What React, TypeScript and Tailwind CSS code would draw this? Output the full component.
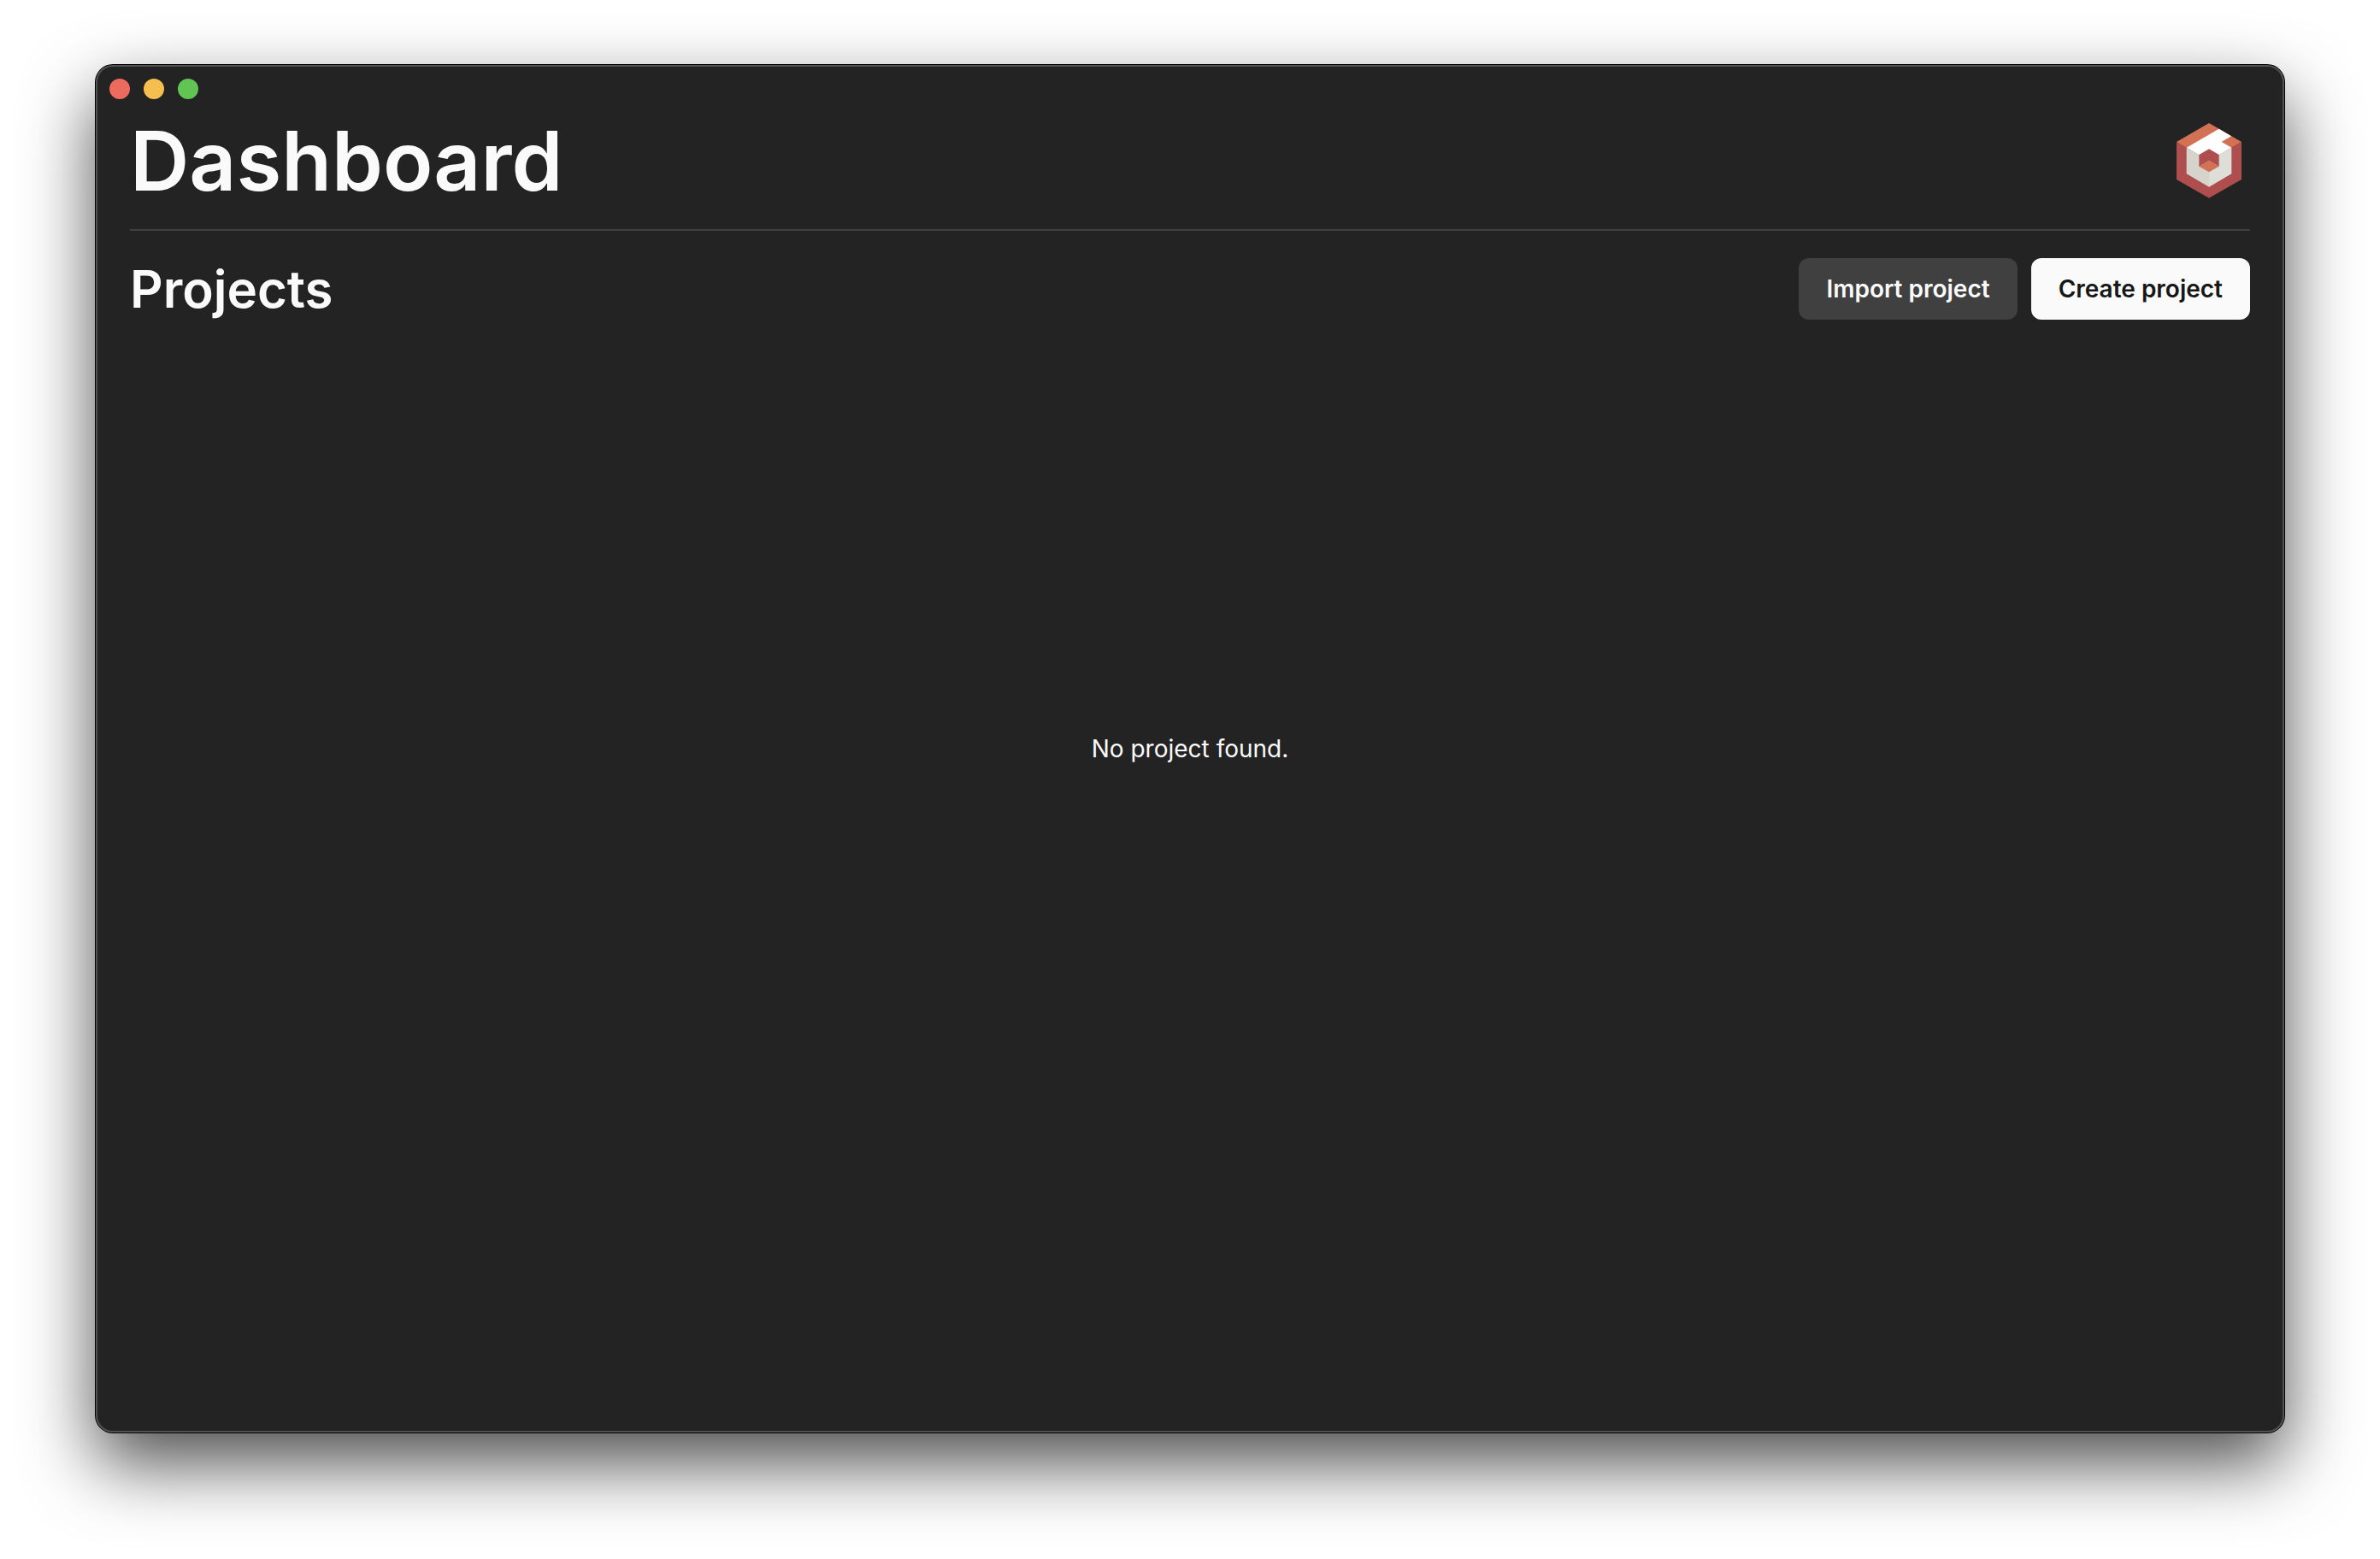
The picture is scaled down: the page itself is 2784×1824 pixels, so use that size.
import React from "react";

function Logo() {
  return (
    <svg viewBox="18 30 288 288" className="size-24 shrink-0" role="img" aria-label="Logo">
      <polygon points="48,108 162,174 276,108 276,240 162,305 48,240" fill="#ae4e4e" />
      <polygon points="162,42 276,108 241,128 84,128 82,128 48,108" fill="#d27153" />
      <polygon points="83,128 197,62 240,88 206,108 241,128 162,175" fill="#ffffff" />
      <polygon points="83,128 162,174 162,266 83,220" fill="#d5d3cc" />
      <polygon points="162,174 241,128 241,220 162,266" fill="#deded9" />
      <polygon points="162,133 197,153 197,194 162,174 127,194 127,153" fill="#ae4e4e" />
      <polygon points="162,174 197,194 162,214 127,194" fill="#d27153" />
    </svg>
  );
}

function WindowControls() {
  return (
    <div className="flex gap-4 px-4 pt-4">
      <button type="button" aria-label="Close" className="size-6 rounded-full bg-[#ed6a5e]" />
      <button type="button" aria-label="Minimize" className="size-6 rounded-full bg-[#f5bf4f]" />
      <button type="button" aria-label="Zoom" className="size-6 rounded-full bg-[#61c554]" />
    </div>
  );
}

export default function App() {
  return (
    <div className="flex min-h-screen bg-white px-28 pt-19 pb-37 font-['Inter',sans-serif] text-[#fafafa]">
      <div className="flex flex-1 flex-col rounded-[20px] bg-[#232323] shadow-[inset_0_0_0_2px_#525252,0_0_0_1px_#000,0_36px_84px_rgba(0,0,0,0.7)]">
        <WindowControls />
        <div className="flex flex-1 flex-col px-10 pt-6">
          <header className="flex items-center justify-between border-b-2 border-[#404040] pb-8">
            <h1 className="text-8xl leading-none font-semibold">Dashboard</h1>
            <Logo />
          </header>
          <section className="flex flex-1 flex-col pt-8">
            <div className="flex items-center justify-between">
              <h2 className="text-6xl leading-[72px] font-semibold">Projects</h2>
              <div className="flex gap-4">
                <button type="button" className="h-18 rounded-xl bg-[#404040] px-8 text-[28px] leading-10 font-semibold">
                  Import project
                </button>
                <button type="button" className="h-18 rounded-xl bg-[#fafafa] px-8 text-[28px] leading-10 font-semibold text-[#171717]">
                  Create project
                </button>
              </div>
            </div>
            <div className="flex flex-1 items-center justify-center pb-[298px]">
              <p className="text-[28px] leading-10">No project found.</p>
            </div>
          </section>
        </div>
      </div>
    </div>
  );
}
